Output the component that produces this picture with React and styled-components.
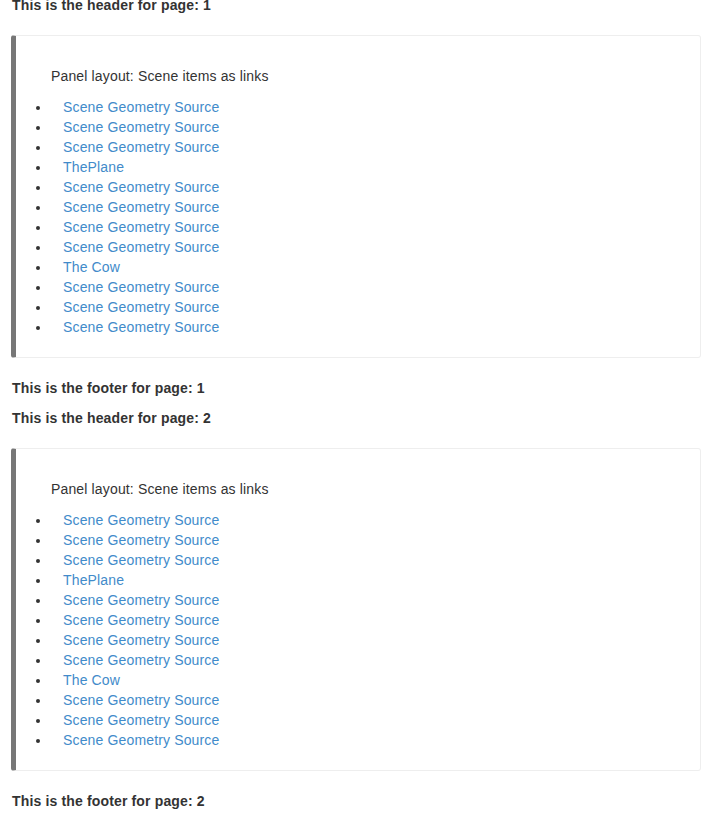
import React from "react";
import styled, { createGlobalStyle } from "styled-components";

const Global = createGlobalStyle`
  html, body { margin: 0; padding: 0; background: #fff; }
  body {
    font-family: "Liberation Sans", Arial, Helvetica, sans-serif;
    font-size: 14px;
    line-height: 20px;
    letter-spacing: 0.15px;
    color: #333;
  }
`;

const Page = styled.div`
  margin-top: -5px;
  padding: 0 24px 0 11px;
`;

const PageTitle = styled.div`
  font-weight: bold;
  line-height: 20px;
  padding-left: 1px;
  margin: ${(p) => (p.$footer ? "20px 0 10px" : "0")};
`;

const Panel = styled.div`
  margin-top: 20px;
  padding: 20px;
  border: 1px solid #eee;
  border-left: 5px solid #777;
  border-radius: 3px;
`;

const Inner = styled.div`
  padding-left: 15px;
`;

const Caption = styled.p`
  margin: 10px 0 11px;
`;

const List = styled.ul`
  margin: 0;
  padding-left: 0;
  list-style: disc outside;
`;

const Item = styled.li`
  line-height: 20px;
`;

const ItemLink = styled.a`
  color: #428bca;
  text-decoration: none;
  padding-left: 12px;
`;

const items = [
  "Scene Geometry Source",
  "Scene Geometry Source",
  "Scene Geometry Source",
  "ThePlane",
  "Scene Geometry Source",
  "Scene Geometry Source",
  "Scene Geometry Source",
  "Scene Geometry Source",
  "The Cow",
  "Scene Geometry Source",
  "Scene Geometry Source",
  "Scene Geometry Source",
];

function PageBlock({ n }) {
  return (
    <>
      <PageTitle>This is the header for page: {n}</PageTitle>
      <Panel>
        <Inner>
          <Caption>Panel layout: Scene items as links</Caption>
          <List>
            {items.map((t, i) => (
              <Item key={i}>
                <ItemLink href="#">{t}</ItemLink>
              </Item>
            ))}
          </List>
        </Inner>
      </Panel>
      <PageTitle $footer>This is the footer for page: {n}</PageTitle>
    </>
  );
}

export default function App() {
  return (
    <>
      <Global />
      <Page>
        <PageBlock n={1} />
        <PageBlock n={2} />
      </Page>
    </>
  );
}
